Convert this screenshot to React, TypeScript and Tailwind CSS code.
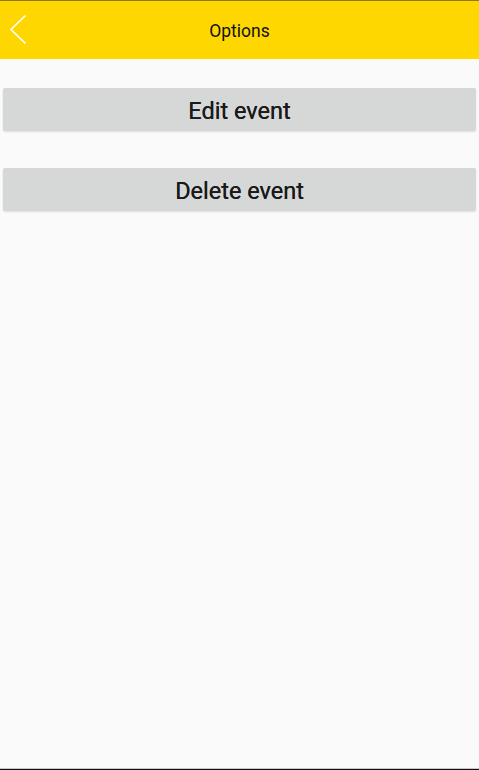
import React from "react";

const App: React.FC = () => {
  return (
    <div className="flex flex-col h-[770px] w-[479px] bg-[#fafafa] font-['Roboto',sans-serif] overflow-hidden">
      {/* Header */}
      <div className="relative flex items-center justify-center h-[59px] bg-[#ffd700] border-t border-[#8a7a10] shrink-0">
        <button className="absolute left-[8px] top-[13px] w-[20px] h-[32px]">
          <svg width="20" height="32" viewBox="0 0 20 32">
            <path d="M17.5 1.5 L3 15.5 L17.5 29.5" fill="none" stroke="#ffffff" strokeWidth="1.6" />
          </svg>
        </button>
        <span className="text-[17.5px] text-[#111] leading-none pt-[4px]">Options</span>
      </div>

      {/* Actions */}
      <div className="flex flex-col gap-[37px] px-[3px] pt-[29px] flex-1">
        <button className="h-[43px] w-full pt-[4px] rounded-[2px] bg-[#d6d7d7] shadow-[0_1px_2px_rgba(0,0,0,0.12)] text-[23.5px] text-[#1a1a1a] [text-shadow:0_0_0.4px_#1a1a1a]">
          Edit event
        </button>
        <button className="h-[43px] w-full pt-[4px] rounded-[2px] bg-[#d6d7d7] shadow-[0_1px_2px_rgba(0,0,0,0.12)] text-[23.5px] text-[#1a1a1a] [text-shadow:0_0_0.4px_#1a1a1a]">
          Delete event
        </button>
      </div>

      <div className="h-px bg-[#c8c8c8] shrink-0" />
      <div className="h-px bg-[#111] shrink-0" />
    </div>
  );
};

export default App;
